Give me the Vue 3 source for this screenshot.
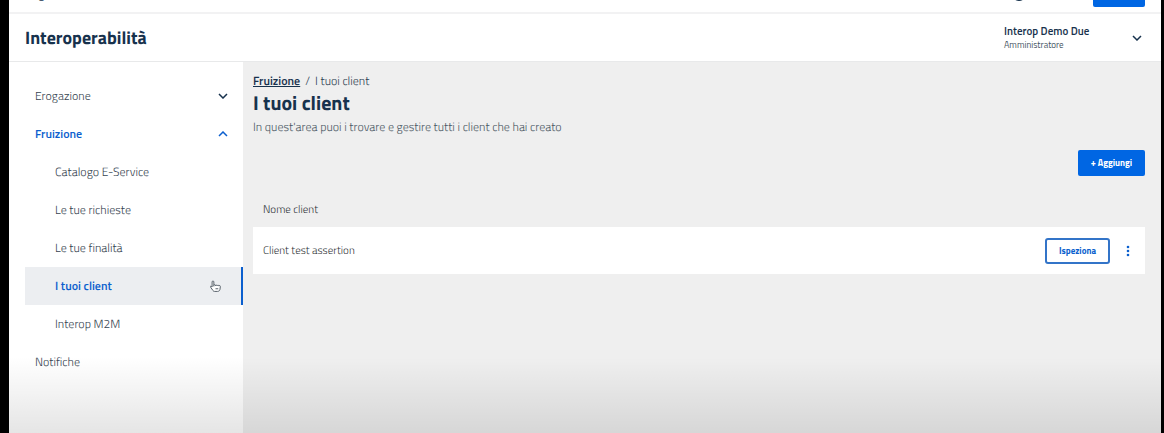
<script setup>
const children = [
  { label: 'Catalogo E-Service' },
  { label: 'Le tue richieste' },
  { label: 'Le tue finalità' },
  { label: 'I tuoi client', active: true },
  { label: 'Interop M2M' },
]
const clients = ['Client test assertion']
</script>

<template>
  <div class="app">
    <div class="topbar">
      <span class="brand">PagoPA</span>
      <div class="session">
        <a href="#" class="help">
          <svg viewBox="0 0 14 14"><circle cx="7" cy="7" r="6" /><path d="M5.500 5.800c0-2 3-2 3 0 0 1-1.500 1-1.500 2.200M7 9v1" /></svg>
          Assistenza
        </a>
        <button class="btn logout">Logout</button>
      </div>
    </div>
    <header class="header">
      <div class="product">Interoperabilità</div>
      <button class="account">
        <span class="who">
          <strong>Interop Demo Due</strong>
          <span>Amministratore</span>
        </span>
        <svg class="chev" viewBox="0 0 10 6"><path d="M1 1l4 4 4-4" /></svg>
      </button>
    </header>
    <div class="body">
      <nav class="side">
        <button class="item">Erogazione<svg class="chev" viewBox="0 0 10 6"><path d="M1 1l4 4 4-4" /></svg></button>
        <button class="item open">Fruizione<svg class="chev" viewBox="0 0 10 6"><path d="M1 5l4-4 4 4" /></svg></button>
        <a v-for="c in children" :key="c.label" href="#" class="item child" :class="{ active: c.active }">
          {{ c.label }}
          <svg v-if="c.active" class="hand" viewBox="0 0 12 13">
            <path d="M4.200 7V2c0-1.300-1.900-1.300-1.900 0v5.600L1.600 6.900C.8 6.200.1 7 .7 7.800l2.500 3.600c.5.700 1 1 1.800 1h3.200c1.500 0 2.500-1 2.700-2.300l.4-3.100c.1-1.200-1.400-1.300-1.600-.4 0-1.200-1.700-1.200-1.900-.3-.2-1-1.700-1-1.800 0V5.700c-.2-.8-1.600-.8-1.800 0M6 9.500h3" />
          </svg>
        </a>
        <a href="#" class="item">Notifiche</a>
      </nav>
      <main class="main">
        <div class="crumbs"><a href="#">Fruizione</a><span>/</span><span>I tuoi client</span></div>
        <h1>I tuoi client</h1>
        <p class="intro">In quest'area puoi i trovare e gestire tutti i client che hai creato</p>
        <div class="actions"><button class="btn add">+ Aggiungi</button></div>
        <table>
          <thead><tr><th>Nome client</th><th></th></tr></thead>
          <tbody>
            <tr v-for="c in clients" :key="c">
              <td>{{ c }}</td>
              <td>
                <div class="tools">
                  <button class="btn inspect">Ispeziona</button>
                  <button class="more" aria-label="Altro"><svg viewBox="0 0 4 12"><circle cx="2" cy="2" r="1.300" /><circle cx="2" cy="6" r="1.300" /><circle cx="2" cy="10" r="1.300" /></svg></button>
                </div>
              </td>
            </tr>
          </tbody>
        </table>
      </main>
    </div>
    <div class="shade"></div>
  </div>
</template>

<style>
body { background: #000; }
</style>

<style scoped>
.app {
  position: relative;
  box-sizing: border-box;
  height: 100vh;
  margin: 0 3px 0 9px;
  display: flex;
  flex-direction: column;
  overflow: hidden;
  background: #fff;
  color: #17324d;
  font-family: "Titillium Web", "Noto Sans", "Open Sans", sans-serif;
  font-size: 12px;
  line-height: 16px;
  text-rendering: geometricPrecision;
}
button { font: inherit; color: inherit; background: none; border: 0; padding: 0; margin: 0; cursor: pointer; }
a { color: inherit; text-decoration: none; }
.topbar {
  flex: none;
  box-sizing: border-box;
  display: flex;
  justify-content: space-between;
  align-items: flex-end;
  height: 40px;
  margin-top: -26px;
  padding: 0 16px 5px;
  border-bottom: 2px solid #f2f2f3;
}
.brand { font-weight: 700; line-height: 26px; }
.session { display: flex; align-items: center; gap: 12px; }
.help { display: flex; align-items: center; gap: 4px; line-height: 26px; font-size: 11px; font-weight: 600; }
.help svg { width: 14px; height: 14px; fill: none; stroke: currentColor; stroke-width: 2; }
.btn {
  box-sizing: border-box;
  height: 26px;
  border-radius: 2px;
  font-size: 9px;
  font-weight: 700;
  color: #fff;
  background: #0066e3;
}
.logout { width: 52px; }
.header {
  flex: none;
  box-sizing: border-box;
  display: flex;
  justify-content: space-between;
  align-items: center;
  height: 48px;
  padding: 0 19px 0 16px;
  border-bottom: 1px solid #e8e9ea;
}
.product { font-size: 18px; line-height: 24px; font-weight: 700; }
.account { display: flex; align-items: center; justify-content: space-between; width: 138px; text-align: left; }
.who { display: flex; flex-direction: column; font-size: 9px; line-height: 14px; color: #455564; }
.who strong { font-size: 11px; line-height: 14px; font-weight: 600; color: #17324d; }
.chev { width: 10px; height: 6px; fill: none; stroke: currentColor; stroke-width: 1.500; }
.body { flex: 1; display: flex; min-height: 0; }
.side { flex: none; width: 234px; padding: 15px 0 0 16px; box-sizing: border-box; }
.item {
  box-sizing: border-box;
  display: flex;
  align-items: center;
  justify-content: space-between;
  width: 100%;
  height: 38px;
  padding: 0 15px 0 10px;
  font-weight: 300;
  color: #35434f;
}
.item .chev { color: #17324d; }
.item.open, .item.open .chev { color: #0b5fce; }
.item.open { font-weight: 600; }
.child { padding-left: 30px; padding-right: 20px; }
.child.active { background: #eceef1; color: #0b5fce; font-weight: 600; border-right: 2px solid #0b5fce; }
.hand { width: 11px; height: 12px; fill: #fff; stroke: #4b555f; stroke-width: 1; }
.main { flex: 1; min-width: 0; background: #efefef; padding: 11px 16px 0 10px; }
.crumbs { display: flex; gap: 5px; font-size: 12px; font-weight: 300; color: #2b3d4f; }
.crumbs a { font-weight: 600; text-decoration: underline; color: #17324d; }
h1 { margin: 0; font-size: 20px; line-height: 28px; font-weight: 700; }
.intro { margin: 2px 0 0; font-size: 12px; font-weight: 300; color: #4a5763; }
.actions { display: flex; justify-content: flex-end; margin-top: 15px; }
.add { width: 67px; }
table { width: 100%; margin-top: 16px; border-collapse: collapse; font-size: 11px; color: #303438; }
th, td { padding: 0 10px; text-align: left; font-weight: 300; }
th { height: 35px; }
td { height: 47px; background: #fff; }
.tools { display: flex; justify-content: flex-end; align-items: center; gap: 16px; }
.inspect { width: 65px; background: #fff; color: #0b5fce; border: 2px solid #3374c8; border-radius: 3px; }
.more { display: flex; padding-right: 5px; }
.more svg { width: 4px; height: 12px; fill: #0b5fce; }
.shade {
  position: absolute;
  left: 0;
  right: 0;
  bottom: 0;
  height: 76px;
  background: linear-gradient(rgba(0, 0, 0, 0), rgba(0, 0, 0, 0.1));
  pointer-events: none;
}
</style>
